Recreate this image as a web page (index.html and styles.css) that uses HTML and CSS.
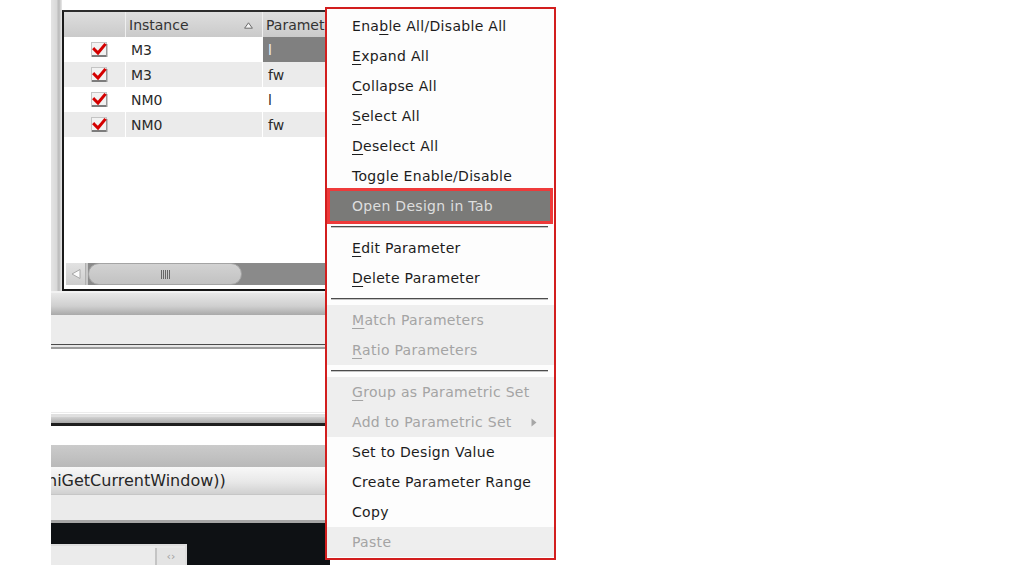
FILE: index.html
```html
<!DOCTYPE html>
<html>
<head>
<meta charset="utf-8">
<link rel="stylesheet" href="styles.css">
</head>
<body>
<div class="page">
  <div class="app">
    <div class="upper">
      <div class="strip"></div>
      <div class="tablewrap">
        <div class="frame">
          <div class="thead">
            <div class="th c1"></div>
            <div class="th c2"><span>Instance</span>
              <svg class="sort" width="9" height="7" viewBox="0 0 9 7"><polygon points="4.5,0.8 8.4,6.2 0.6,6.2" fill="#f6f6f6" stroke="#6a6a6a" stroke-width="1"/></svg>
            </div>
            <div class="th c3">Parameter</div>
          </div>
          <div class="row">
            <div class="td c1"><svg class="cb" width="17" height="16" viewBox="0 0 17 16"><rect x="0.5" y="0.5" width="15" height="14" fill="#f2f2f2" stroke="#c4c4c4"/><rect x="1" y="13" width="15" height="2" fill="#7c7c7c"/><rect x="15" y="2" width="1.5" height="13" fill="#9a9a9a"/><path d="M3.2 7.2 L7 11 L13.6 3" fill="none" stroke="#d40000" stroke-width="3" stroke-linecap="square"/></svg></div>
            <div class="td c2">M3</div>
            <div class="td c3 sel">l</div>
          </div>
          <div class="row alt">
            <div class="td c1"><svg class="cb" width="17" height="16" viewBox="0 0 17 16"><rect x="0.5" y="0.5" width="15" height="14" fill="#f2f2f2" stroke="#c4c4c4"/><rect x="1" y="13" width="15" height="2" fill="#7c7c7c"/><rect x="15" y="2" width="1.5" height="13" fill="#9a9a9a"/><path d="M3.2 7.2 L7 11 L13.6 3" fill="none" stroke="#d40000" stroke-width="3" stroke-linecap="square"/></svg></div>
            <div class="td c2">M3</div>
            <div class="td c3">fw</div>
          </div>
          <div class="row">
            <div class="td c1"><svg class="cb" width="17" height="16" viewBox="0 0 17 16"><rect x="0.5" y="0.5" width="15" height="14" fill="#f2f2f2" stroke="#c4c4c4"/><rect x="1" y="13" width="15" height="2" fill="#7c7c7c"/><rect x="15" y="2" width="1.5" height="13" fill="#9a9a9a"/><path d="M3.2 7.2 L7 11 L13.6 3" fill="none" stroke="#d40000" stroke-width="3" stroke-linecap="square"/></svg></div>
            <div class="td c2">NM0</div>
            <div class="td c3">l</div>
          </div>
          <div class="row alt">
            <div class="td c1"><svg class="cb" width="17" height="16" viewBox="0 0 17 16"><rect x="0.5" y="0.5" width="15" height="14" fill="#f2f2f2" stroke="#c4c4c4"/><rect x="1" y="13" width="15" height="2" fill="#7c7c7c"/><rect x="15" y="2" width="1.5" height="13" fill="#9a9a9a"/><path d="M3.2 7.2 L7 11 L13.6 3" fill="none" stroke="#d40000" stroke-width="3" stroke-linecap="square"/></svg></div>
            <div class="td c2">NM0</div>
            <div class="td c3">fw</div>
          </div>
          <div class="empty"></div>
          <div class="hscroll">
            <div class="hs-btn"><svg width="12" height="12" viewBox="0 0 12 12"><polygon points="2,6 10,1.5 10,10.5" fill="#fafafa" stroke="#a8a8a8" stroke-width="1"/></svg></div>
            <div class="hs-gap"></div>
            <div class="hs-thumb"><span class="grip"></span></div>
            <div class="hs-track"></div>
          </div>
        </div>
      </div>
    </div>
    <div class="gap2"></div>
    <div class="band-grad"></div>
    <div class="band-light"></div>
    <div class="rule-a"></div>
    <div class="white-a"></div>
    <div class="rule-b"></div>
    <div class="white-b"></div>
    <div class="band-grey"></div>
    <div class="cmdline">hiGetCurrentWindow))</div>
    <div class="band-light2"></div>
    <div class="rule-c"></div>
    <div class="dark">
      <div class="minibox">
        <div class="mini-field"></div>
        <div class="mini-btn">&lsaquo;&rsaquo;</div>
      </div>
    </div>
  </div>

  <div class="menu">
    <div class="item">Ena<u>b</u>le All/Disable All</div>
    <div class="item"><u>E</u>xpand All</div>
    <div class="item"><u>C</u>ollapse All</div>
    <div class="item"><u>S</u>elect All</div>
    <div class="item"><u>D</u>eselect All</div>
    <div class="item">Toggle Enable/Disable</div>
    <div class="item active">Open Design in Tab</div>
    <div class="sep"></div>
    <div class="item"><u>E</u>dit Parameter</div>
    <div class="item"><u>D</u>elete Parameter</div>
    <div class="sep"></div>
    <div class="item disabled"><u>M</u>atch Parameters</div>
    <div class="item disabled"><u>R</u>atio Parameters</div>
    <div class="sep"></div>
    <div class="item disabled"><u>G</u>roup as Parametric Set</div>
    <div class="item disabled"><span>Add to Parametric Set</span><svg class="sub" width="6" height="9" viewBox="0 0 6 9"><polygon points="0.5,0.5 5.5,4.5 0.5,8.5" fill="#a6a6a6"/></svg></div>
    <div class="item">Set to Design Value</div>
    <div class="item">Create Parameter Range</div>
    <div class="item">Copy</div>
    <div class="item disabled">Paste</div>
  </div>
</div>
</body>
</html>
```

FILE: styles.css
```css
html, body {
  margin: 0;
  padding: 0;
  background: #ffffff;
}

body {
  font-family: "DejaVu Sans", "Liberation Sans", sans-serif;
  color: #1c1c1c;
}

.page {
  position: relative;
  width: 1013px;
  height: 565px;
  overflow: hidden;
}

/* ---------- application area (left) ---------- */
.app {
  margin-left: 51px;
  width: 279px;
  height: 565px;
  display: flex;
  flex-direction: column;
  overflow: hidden;
}

.upper {
  display: flex;
  height: 291px;
  flex: none;
}

.strip {
  width: 11px;
  flex: none;
  background: linear-gradient(90deg, #e4e4e4 0, #d8d8d8 6px, #bcbcbc 7px, #c4c4c4 9px, #e2e2e2 10px, #e2e2e2 11px);
}

.tablewrap {
  flex: 1;
  padding-top: 10px;
  display: flex;
  flex-direction: column;
}

.frame {
  flex: 1;
  display: flex;
  flex-direction: column;
  background: #ffffff;
  border-top: 2px solid #2c2c2c;
  border-left: 2px solid #1a1a1a;
  border-bottom: 2px solid #141414;
}

.thead {
  height: 25px;
  display: flex;
  flex: none;
  background: linear-gradient(#dedede, #cacaca);
  font-size: 14px;
  color: #333333;
}

.th {
  display: flex;
  align-items: center;
  box-sizing: border-box;
  border-right: 1px solid #efefef;
}

.c1 { width: 62px; flex: none; }
.c2 { width: 137px; flex: none; }
.c3 { flex: 1; border-right: none; }

.th.c2 {
  padding-left: 3px;
  justify-content: space-between;
  padding-right: 9px;
}

.th.c3 { padding-left: 3px; }

.sort { display: block; margin-top: 1px; }

.row {
  height: 25px;
  display: flex;
  flex: none;
  font-size: 14px;
  color: #2a2a2a;
  background: #ffffff;
}

.row.alt { background: #ebebeb; }

.td {
  display: flex;
  align-items: center;
  box-sizing: border-box;
  border-right: 1px solid #ffffff;
}

.td.c1 { padding-left: 27px; }
.td.c2 { padding-left: 5px; }
.td.c3 { padding-left: 5px; border-right: none; }

.td.sel {
  background: #808080;
  color: #f2f2f2;
}

.cb { display: block; }

.empty { flex: 1; }

.hscroll {
  height: 22px;
  flex: none;
  margin-bottom: 4px;
  margin-left: 2px;
  display: flex;
  background: #8a8a8a;
}

.hs-btn {
  width: 20px;
  flex: none;
  display: flex;
  align-items: center;
  justify-content: center;
  background: linear-gradient(#e2e2e2, #cdcdcd);
  border-right: 1px solid #b0b0b0;
  box-sizing: border-box;
}

.hs-gap {
  width: 2px;
  flex: none;
  background: #c8c8c8;
}

.hs-thumb {
  width: 154px;
  flex: none;
  box-sizing: border-box;
  border: 1px solid #a4a4a4;
  border-radius: 11px;
  background: linear-gradient(#d2d2d2, #c2c2c2);
  display: flex;
  align-items: center;
  justify-content: center;
}

.grip {
  width: 9px;
  height: 9px;
  background: repeating-linear-gradient(90deg, #666 0, #666 1px, transparent 1px, transparent 2px);
}

.hs-track { flex: 1; }

.gap2 { height: 2px; flex: none; background: #f2f2f2; }

.band-grad {
  height: 22px;
  flex: none;
  background: linear-gradient(#e8e8e8, #cfcfcf 60%, #a9a9a9);
}

.band-light {
  height: 29px;
  flex: none;
  background: #ececec;
}

.rule-a {
  height: 5px;
  flex: none;
  background: linear-gradient(#4a4a4a 0, #4a4a4a 1px, #e6e6e6 1px, #e6e6e6 3px, #9c9c9c 3px);
}

.white-a {
  height: 63px;
  flex: none;
  background: #ffffff;
}

.rule-b {
  height: 14px;
  flex: none;
  background: linear-gradient(#ececec 0, #ececec 1px, #ffffff 1px, #ffffff 2px, #e0e0e0 2px, #e0e0e0 5px, #d2d2d2 5px, #a8a8a8 11px, #1e1e1e 11px);
}

.white-b {
  height: 19px;
  flex: none;
  background: #ffffff;
}

.band-grey {
  height: 22px;
  flex: none;
  background: linear-gradient(#cbcbcb, #b9b9b9);
}

.cmdline {
  height: 28px;
  flex: none;
  box-sizing: border-box;
  display: flex;
  align-items: center;
  font-size: 16px;
  color: #262626;
  white-space: nowrap;
  text-indent: -4px;
  background: linear-gradient(#f8f8f8, #e8e8e8 55%, #d0d0d0);
  border-bottom: 1px solid #c6c6c6;
}

.band-light2 {
  height: 25px;
  flex: none;
  background: #ebebeb;
}

.rule-c {
  height: 3px;
  flex: none;
  background: #a6a6a6;
}

.dark {
  flex: 1;
  background: #0e1114;
  padding-top: 21px;
}

.minibox {
  width: 136px;
  height: 24px;
  box-sizing: border-box;
  border-top: 2px solid #dedede;
  border-right: 2px solid #dedede;
  display: flex;
  background: #e8e8e8;
}

.mini-field { flex: 1; background: #ebebeb; }

.mini-btn {
  width: 28px;
  flex: none;
  border-left: 2px solid #c4c4c4;
  margin-top: 2px;
  background: #e4e4e4;
  color: #a0a0a0;
  font-size: 11px;
  text-align: center;
  line-height: 18px;
}

/* ---------- context menu ---------- */
.menu {
  position: absolute;
  left: 325px;
  top: 7px;
  width: 231px;
  box-sizing: border-box;
  border: 2px solid #d21e1e;
  background: #fdfdfd;
  padding: 2px 0 1px;
  font-size: 14px;
  letter-spacing: 0.3px;
}

.item {
  height: 30px;
  line-height: 30px;
  padding-left: 25px;
  color: #1c1c1c;
  white-space: nowrap;
  display: flex;
  align-items: center;
}

.item u {
  text-decoration-thickness: 1px;
  text-underline-offset: 3px;
}

.item.active {
  margin: 0 4px 0 3px;
  padding-left: 22px;
  background: #7a7a78;
  color: #dedede;
  outline: 3px solid #ee3a3a;
}

.item.disabled {
  background: #eeeeee;
  color: #a4a4a4;
}

.sub {
  margin-left: auto;
  margin-right: 17px;
  display: block;
}

.sep {
  height: 12px;
  display: flex;
  align-items: center;
  padding: 0 6px 0 4px;
}

.sep::before {
  content: "";
  flex: 1;
  height: 2px;
  background: linear-gradient(#4c4c4c 50%, #c4c4c4 50%);
}
```
